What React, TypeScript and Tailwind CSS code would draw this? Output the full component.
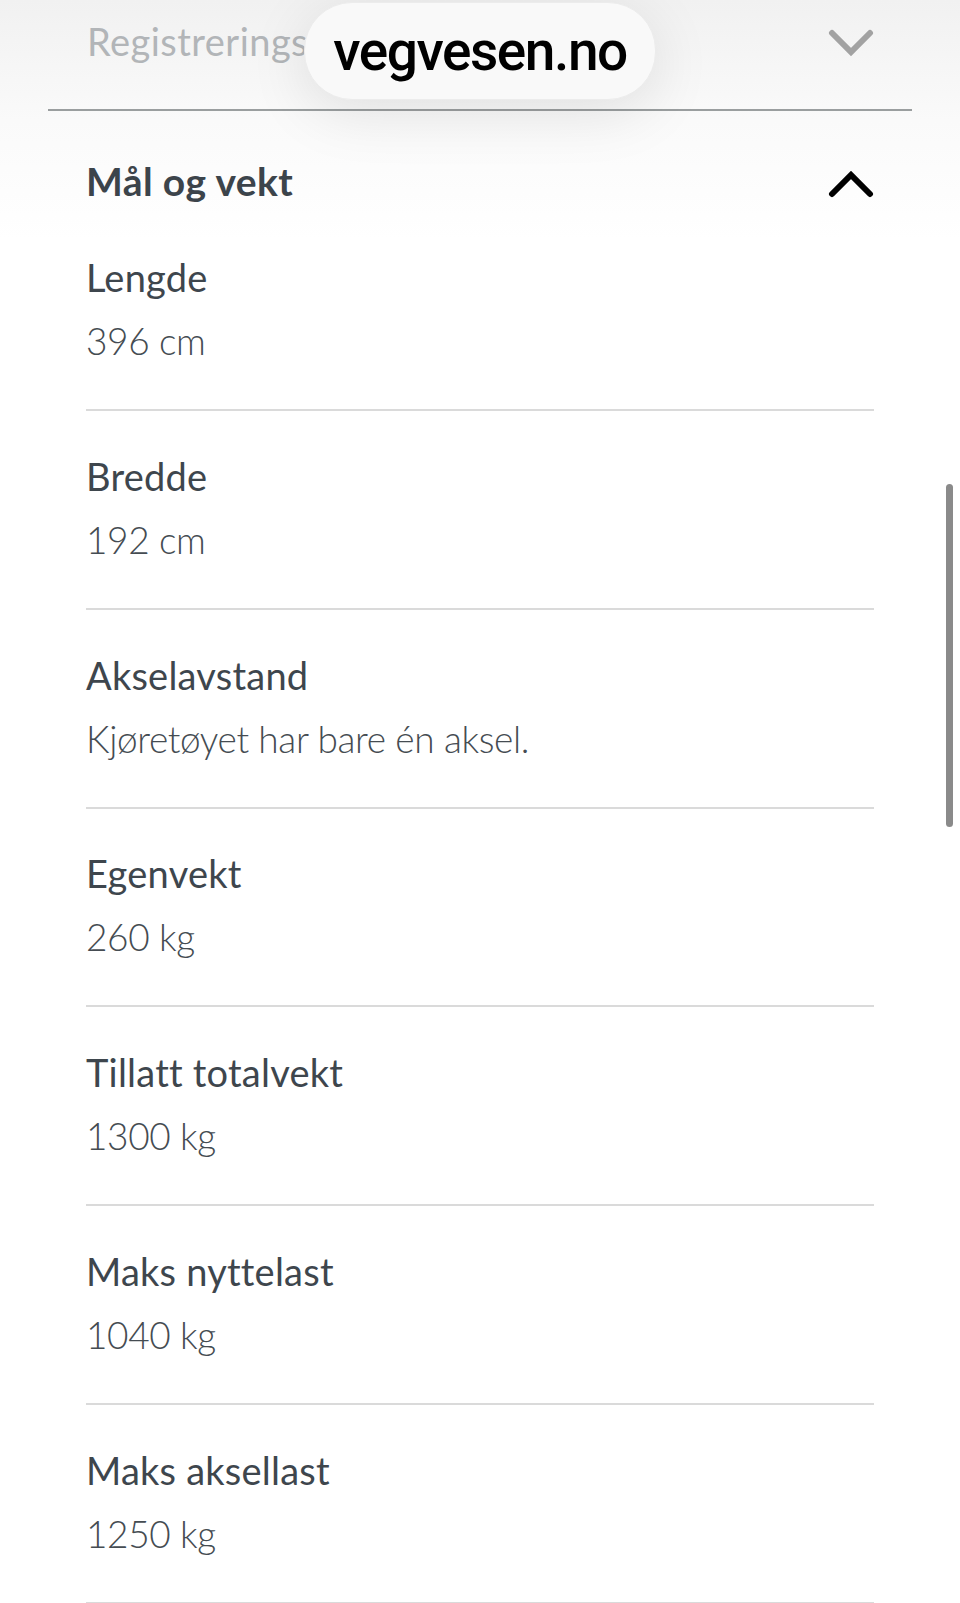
import React from 'react';

const rows = [
  { label: 'Lengde', value: '396 cm' },
  { label: 'Bredde', value: '192 cm' },
  { label: 'Akselavstand', value: 'Kjøretøyet har bare én aksel.' },
  { label: 'Egenvekt', value: '260 kg' },
  { label: 'Tillatt totalvekt', value: '1300 kg' },
  { label: 'Maks nyttelast', value: '1040 kg' },
  { label: 'Maks aksellast', value: '1250 kg' },
];

function Chevron({ up, className }: { up?: boolean; className?: string }) {
  return (
    <svg width="46" height="28" viewBox="0 0 46 28" className={className} fill="none">
      <polyline
        points={up ? '4,24 23,5 42,24' : '4,4 23,23 42,4'}
        stroke="currentColor"
        strokeWidth="6"
        strokeLinecap="round"
        strokeLinejoin="miter"
      />
    </svg>
  );
}

export default function App() {
  return (
    <div className="relative min-h-[1603px] overflow-hidden bg-white font-['Lato','Open_Sans',sans-serif] text-[#3e464d]">
      {/* browser chrome fade at the top */}
      <div className="pointer-events-none absolute inset-x-0 top-0 h-[240px] bg-gradient-to-b from-[#f1f1f1] via-[#fafafa] to-white" />

      <div className="relative px-[48px]">
        {/* collapsed section, scrolled mostly out of view */}
        <div className="flex items-start justify-between border-b-2 border-[#9a9e9f] pl-[39px] pr-[38px] pt-[17px] pb-[44px]">
          <span className="whitespace-nowrap text-[38px] leading-[48px] tracking-[0.012em] text-[#b2b5b8]">Registrerings</span>
          <Chevron className="mt-[12px] text-[#a2a2a2]" />
        </div>

        {/* open section */}
        <div className="px-[38px]">
          <div className="flex items-start justify-between pt-[45.7px] pb-[8px]">
            <h2 className="text-[39px] font-bold leading-[48px] tracking-[0.01em] text-[#3c444b]">Mål og vekt</h2>
            <Chevron up className="mt-[13px] text-black" />
          </div>

          <div>
            {rows.map((r) => (
              <div key={r.label} className="flex flex-col gap-[16px] border-b-2 border-[#dadada] pt-[40.7px] pb-[44px]">
                <span className="text-[38px] leading-[48px] tracking-[0.006em]">{r.label}</span>
                <span className="text-[37px] font-light leading-[48px] tracking-[-0.01em] text-[#454c52]">{r.value}</span>
              </div>
            ))}
          </div>
        </div>
      </div>

      {/* address pill */}
      <div className="absolute left-[304px] top-[2px] flex h-[98px] w-[352px] items-center justify-center rounded-[48px] border border-[#ececec] bg-[#f9f9f9] shadow-[0_12px_60px_rgba(0,0,0,0.10)]">
        <span className="font-['Roboto',sans-serif] text-[55px] font-medium leading-none tracking-[-0.026em] text-black">
          vegvesen.no
        </span>
      </div>

      {/* scrollbar */}
      <div className="absolute left-[946px] top-[484px] h-[343px] w-[7px] rounded-full bg-[#8a8a8a]" />
    </div>
  );
}
